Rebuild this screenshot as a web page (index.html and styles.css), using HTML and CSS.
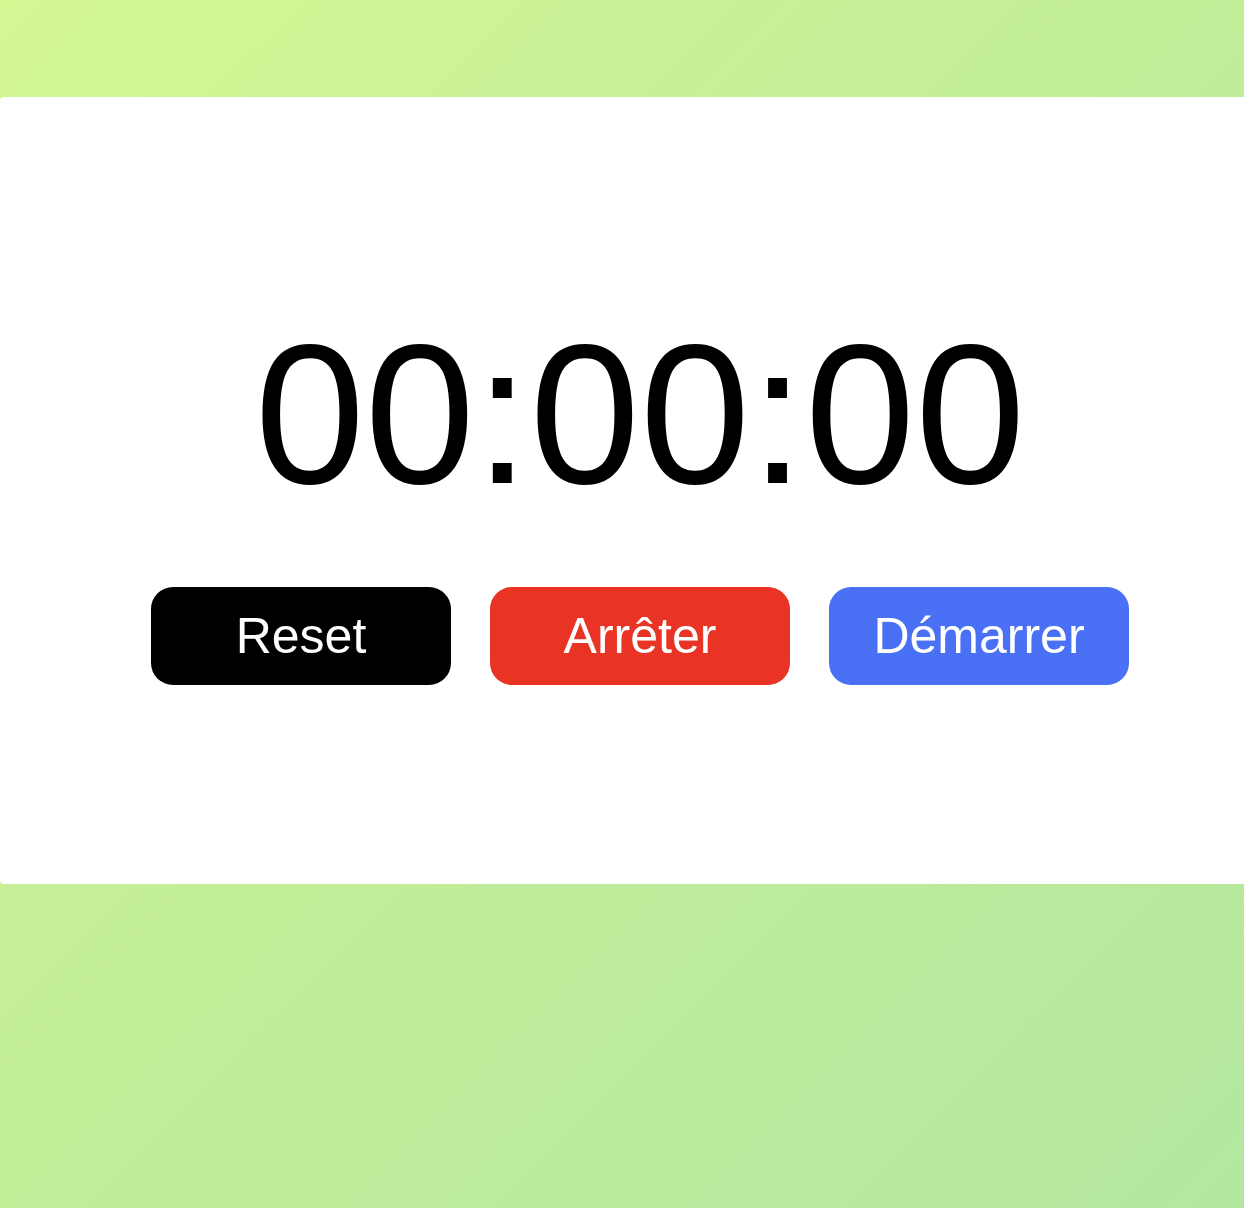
FILE: index.html
```html
<!DOCTYPE html>
<html lang="fr">
<head>
<meta charset="utf-8">
<title>Chronomètre</title>
<link rel="stylesheet" href="styles.css">
</head>
<body>
<main class="stage">
  <section class="panel">
    <div class="timer">00:00:00</div>
    <div class="controls">
      <button class="btn btn-reset" type="button">Reset</button>
      <button class="btn btn-stop" type="button">Arrêter</button>
      <button class="btn btn-start" type="button">Démarrer</button>
    </div>
  </section>
</main>
</body>
</html>
```

FILE: styles.css
```css
html, body {
  margin: 0;
  padding: 0;
}

body {
  min-height: 1208px;
  overflow: hidden;
  font-family: "Liberation Sans", Arial, sans-serif;
  background: linear-gradient(135deg, #d3f793 0%, #c3ee99 45%, #b3e79f 100%);
}

.stage {
  width: 1280px;
  padding-top: 97px;
}

.panel {
  background: #ffffff;
  border-radius: 4px;
  height: 787px;
  box-sizing: border-box;
  padding-top: 203px;
  display: flex;
  flex-direction: column;
  align-items: center;
}

.timer {
  font-size: 198px;
  line-height: 230px;
  color: #000000;
  text-align: center;
}

.controls {
  margin-top: 57px;
  display: flex;
  gap: 39px;
}

.btn {
  width: 300px;
  height: 98px;
  border: none;
  border-radius: 22px;
  color: #ffffff;
  font-family: "Liberation Sans", Arial, sans-serif;
  font-size: 50px;
  padding: 0;
  cursor: pointer;
}

.btn-reset { background: #000000; }
.btn-stop { background: #e83325; }
.btn-start { background: #4a70f6; }
```
